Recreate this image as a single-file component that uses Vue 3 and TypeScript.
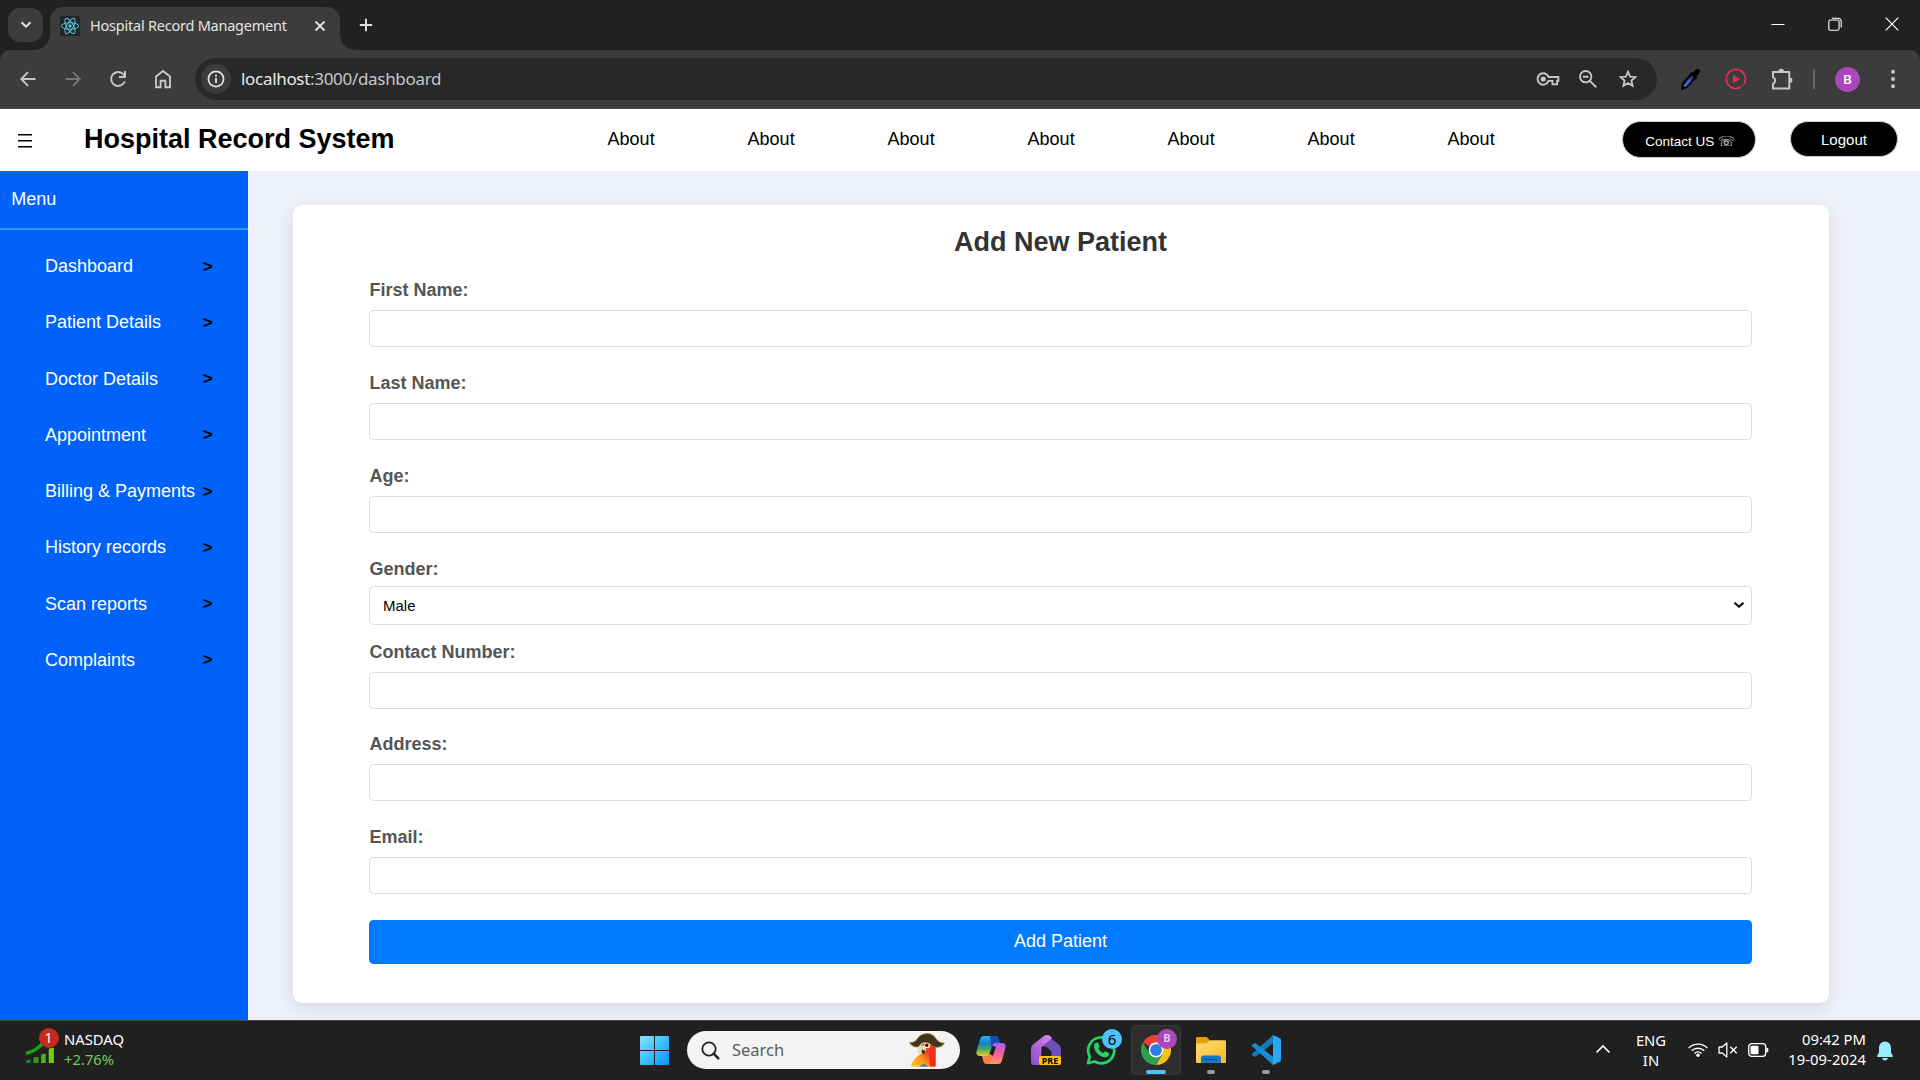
<script setup lang="ts">
import { ref } from 'vue'

interface Field {
  id: string
  label: string
  kind: 'text' | 'select'
}

const navLinks: string[] = Array.from({ length: 7 }, () => 'About')

const menuItems: string[] = [
  'Dashboard',
  'Patient Details',
  'Doctor Details',
  'Appointment',
  'Billing & Payments',
  'History records',
  'Scan reports',
  'Complaints',
]

const fields: Field[] = [
  { id: 'first', label: 'First Name:', kind: 'text' },
  { id: 'last', label: 'Last Name:', kind: 'text' },
  { id: 'age', label: 'Age:', kind: 'text' },
  { id: 'gender', label: 'Gender:', kind: 'select' },
  { id: 'phone-number', label: 'Contact Number:', kind: 'text' },
  { id: 'address', label: 'Address:', kind: 'text' },
  { id: 'email', label: 'Email:', kind: 'text' },
]

const gender = ref('Male')
</script>

<template>
  <div class="screen">
    <!-- Browser tab strip -->
    <div class="tabstrip">
      <div class="tab-search">
        <svg width="12" height="8" viewBox="0 0 12 8"><path d="M1.5 1.2 6 5.7l4.500-4.500" fill="none" stroke="#e3e3e3" stroke-width="2" /></svg>
      </div>
      <div class="tab">
        <svg class="favicon" width="20" height="20" viewBox="0 0 20 20">
          <rect width="20" height="20" rx="1.500" fill="#222425" />
          <g fill="none" stroke="#58c4dc" stroke-width="1">
            <ellipse cx="10" cy="10" rx="8.600" ry="3.300" />
            <ellipse cx="10" cy="10" rx="8.600" ry="3.300" transform="rotate(60 10 10)" />
            <ellipse cx="10" cy="10" rx="8.600" ry="3.300" transform="rotate(120 10 10)" />
          </g>
          <circle cx="10" cy="10" r="1.700" fill="#58c4dc" />
        </svg>
        <span class="tab-title">Hospital Record Management</span>
        <svg class="tab-close" width="12" height="12" viewBox="0 0 12 12"><path d="M1.500 1.500l9 9m0-9l-9 9" stroke="#e3e3e3" stroke-width="1.800" /></svg>
      </div>
      <svg class="new-tab" width="14" height="14" viewBox="0 0 14 14"><path d="M7 .8v12.400M.8 7h12.400" stroke="#e3e3e3" stroke-width="1.900" /></svg>
      <div class="window-buttons">
        <svg width="14" height="14" viewBox="0 0 14 14"><path d="M.5 7.500h13" stroke="#fff" stroke-width="1" /></svg>
        <svg width="14" height="14" viewBox="0 0 14 14" fill="none" stroke="#fff" stroke-width="1.100">
          <path d="M3.800 1.200h6.400a3 3 0 0 1 3 3v6.400" />
          <rect x=".8" y="3" width="10.300" height="10.300" rx="1.800" />
        </svg>
        <svg width="14" height="14" viewBox="0 0 14 14"><path d="M.7.7l12.600 12.600m0-12.600L.7 13.300" stroke="#fff" stroke-width="1.200" /></svg>
      </div>
    </div>

    <!-- Browser toolbar -->
    <div class="toolbar-back">
      <div class="toolbar">
        <div class="nav-slot"><svg width="18" height="18" viewBox="0 0 18 18" fill="none" stroke="#c7c7c7" stroke-width="1.900"><path d="M16.500 9H2.600M9 2.200 2.300 9 9 15.800" /></svg></div>
        <div class="nav-slot"><svg width="18" height="18" viewBox="0 0 18 18" fill="none" stroke="#777" stroke-width="1.900"><path d="M1.500 9h13.900M9 2.200 15.700 9 9 15.800" /></svg></div>
        <div class="nav-slot"><svg width="18" height="18" viewBox="0 0 18 18" fill="none" stroke="#c7c7c7" stroke-width="1.900"><path d="M15.800 11.200A7 7 0 1 1 14.300 4.200L16 6.200" /><path d="M16 1v6h-6" /></svg></div>
        <div class="nav-slot"><svg width="18" height="20" viewBox="0 0 18 20" fill="none" stroke="#c7c7c7" stroke-width="1.900"><path d="M2 18.300V7.400L9 2l7 5.400v10.900h-4.600v-6.500H6.600v6.500z" /></svg></div>

        <div class="omnibox">
          <div class="site-info">
            <svg width="18" height="18" viewBox="0 0 18 18"><circle cx="9" cy="9" r="7.600" fill="none" stroke="#e3e3e3" stroke-width="1.700" /><path d="M9 8v5M9 4.800v1.900" stroke="#e3e3e3" stroke-width="1.800" /></svg>
          </div>
          <span class="url"><span class="host">localhost</span>:3000/dashboard</span>
          <div class="omni-icons">
            <svg width="24" height="16" viewBox="0 0 24 16" fill="none" stroke="#c7c7c7" stroke-width="1.900">
              <path d="M12.600 6H22.400v3.800h-1.300v3.600h-4.600V9.900h-3.900A5.700 5.700 0 1 1 12.600 6z" />
              <circle cx="7.200" cy="8" r="2.600" fill="#c7c7c7" stroke="none" />
            </svg>
            <svg width="20" height="20" viewBox="0 0 20 20" fill="none" stroke="#c7c7c7" stroke-width="1.900">
              <circle cx="7.700" cy="7.700" r="5.700" /><path d="M11.900 11.900l6.400 6.400M4.900 7.700h5.600" />
            </svg>
            <svg width="20" height="20" viewBox="0 0 20 20" fill="none" stroke="#c7c7c7" stroke-width="1.800">
              <path d="M10 2.700l2.100 4.900 5.300.5-4 3.500 1.200 5.200L10 14l-4.600 2.800 1.200-5.200-4-3.500 5.300-.5z" />
            </svg>
          </div>
        </div>

        <div class="extensions">
          <svg width="20" height="22" viewBox="0 0 20 22">
            <path d="M1 21l1-5.500L10.500 6l3.800 3.800L5.500 19z" fill="#24408f" stroke="#000" stroke-width="2" />
            <path d="M3.600 18.500l5.600-6.300" stroke="#4665d8" stroke-width="2.600" />
            <path d="M9 5.300l1.800-1.500 1.200 1 2.500-3c1.500-1.400 3.500-1 4.200.3.600 1.200.3 2.500-.7 3.500L15.300 8.400l1 1.400-1.700 1.700z" fill="#000" />
          </svg>
          <svg width="22" height="22" viewBox="0 0 22 22" fill="none">
            <path d="M19.200 15.600A9.500 9.500 0 1 0 15.500 19.300" stroke="#ee2c5c" stroke-width="1.600" />
            <path d="M17.500 17.900l.7-.8" stroke="#ee2c5c" stroke-width="1.600" />
            <path d="M8 6.700v8.600l7.500-4.300z" fill="#e0294f" />
          </svg>
          <svg width="23" height="23" viewBox="0 0 23 23">
            <path d="M3 4h16.300v16.600H3v-4.800a3.700 3.700 0 0 0 0-6.700z" fill="none" stroke="#c7c7c7" stroke-width="2" stroke-linejoin="round" />
            <path d="M8.300 3.600a2.800 2.800 0 0 1 5.600 0zM19.700 9.500a2.700 2.700 0 0 1 0 5.400z" fill="#c7c7c7" />
          </svg>
        </div>
        <span class="divider"></span>
        <span class="avatar">B</span>
        <svg class="kebab" width="6" height="20" viewBox="0 0 6 20" fill="#c7c7c7"><circle cx="3" cy="2.800" r="2" /><circle cx="3" cy="10" r="2" /><circle cx="3" cy="17.200" r="2" /></svg>
      </div>
    </div>

    <!-- Application header -->
    <header class="app-header">
      <svg class="burger" width="14" height="14" viewBox="0 0 14 14"><path d="M0 .7h14M0 6.700h14M0 12.700h14" stroke="#000" stroke-width="1.400" /></svg>
      <h1>Hospital Record System</h1>
      <nav>
        <a v-for="(link, i) in navLinks" :key="i">{{ link }}</a>
      </nav>
      <button class="contact">Contact US <span class="phone">☏</span></button>
      <button class="logout">Logout</button>
    </header>

    <div class="app-body">
      <aside>
        <div class="menu-title">Menu</div>
        <ul>
          <li v-for="item in menuItems" :key="item"><span>{{ item }}</span><b>&gt;</b></li>
        </ul>
      </aside>

      <main>
        <form class="card" @submit.prevent>
          <h2>Add New Patient</h2>
          <div v-for="f in fields" :key="f.id" class="field" :class="[f.kind, f.id]">
            <label :for="f.id">{{ f.label }}</label>
            <input v-if="f.kind === 'text'" :id="f.id" type="text" />
            <div v-else class="select-box">
              <select :id="f.id" v-model="gender">
                <option>Male</option>
                <option>Female</option>
                <option>Other</option>
              </select>
              <svg class="caret" width="12" height="8" viewBox="0 0 12 8"><path d="M1.500 1.700 6 5.700l4.500-4" fill="none" stroke="#000" stroke-width="2" /></svg>
            </div>
          </div>
          <button class="submit" type="submit">Add Patient</button>
        </form>
      </main>
    </div>

    <!-- Desktop taskbar -->
    <footer class="taskbar">
      <div class="widget">
        <svg width="30" height="36" viewBox="0 0 30 36">
          <path d="M1 25.500C10 23.500 15 19 20 12.500" fill="none" stroke="#1ea01c" stroke-width="3.400" />
          <path d="M1 35v-1a2.200 2.200 0 0 1 2.200-2.200H5.500V35z" fill="#128a1c" />
          <path d="M8.500 35v-3.800a2.200 2.200 0 0 1 2.200-2.200h2.800v6z" fill="#2f9e16" />
          <path d="M16 35v-7a2.200 2.200 0 0 1 2.200-2.200h2.600V35z" fill="#48b412" />
          <path d="M23.700 35V22.200a2.200 2.200 0 0 1 2.200-2.200h3V35z" fill="#70cf0e" />
        </svg>
        <span class="badge red">1</span>
        <div class="ticker"><span>NASDAQ</span><span class="up">+2.76%</span></div>
      </div>

      <svg class="start" width="29" height="29" viewBox="0 0 29 29">
        <defs><linearGradient id="win" gradientUnits="userSpaceOnUse" x1="0" y1="0" x2="29" y2="29"><stop offset="0" stop-color="#86e3ff" /><stop offset=".5" stop-color="#3cc2fb" /><stop offset="1" stop-color="#0a8ffa" /></linearGradient></defs>
        <path d="M1 0h13v14H0V1a1 1 0 0 1 1-1zM15 0h13a1 1 0 0 1 1 1v13H15zM0 15h14v14H1a1 1 0 0 1-1-1zM15 15h14v13a1 1 0 0 1-1 1H15z" fill="url(#win)" />
      </svg>

      <div class="search">
        <svg width="19" height="19" viewBox="0 0 19 19" fill="none" stroke="#222"><circle cx="8" cy="8" r="6.700" stroke-width="1.800" /><path d="M12.700 12.700l4.600 4.600" stroke-width="2.500" stroke-linecap="round" /></svg>
        <span>Search</span>
        <svg class="parrot" width="36" height="34" viewBox="0 0 36 34">
          <defs><linearGradient id="body" x1="0" y1="1" x2="1" y2="0"><stop offset="0" stop-color="#ffc91c" /><stop offset=".35" stop-color="#fb9a1e" /><stop offset=".6" stop-color="#f4431d" /><stop offset="1" stop-color="#e52314" /></linearGradient></defs>
          <path d="M1.500 33.500C4 27 8 22.500 13.500 20.500L12 12l10-5 4.500 5v21.500z" fill="url(#body)" />
          <path d="M20 11h6.500v22.500H21z" fill="#ef2f19" />
          <path d="M9.500 33.500l5-2.500 5.500 2.500z" fill="#287ab8" />
          <path d="M11 13c-3 2.500-3 6-.5 9 1.700-1 2.500-2 3-3.500l2 1.500c2-2.500 2-6 0-7.500z" fill="#e9d9b6" />
          <path d="M13 16.500l3.500 1.500-1.500 3.500c-2-.5-2.700-2.500-2-5z" fill="#37302c" />
          <circle cx="18.200" cy="12.300" r="3" fill="#fff4e4" /><circle cx="17.800" cy="12.300" r="1.700" fill="#161616" />
          <path d="M.5 9.500C4 9.800 6.500 8.800 8.500 5.500 11 1.800 15 .6 18.500.6c4 0 6.500 2 8.500 5 2 3 4.500 4.500 8.500 4.400-1.700 3-5 4.800-9 4.200C22 13.500 21.500 9.500 17 9.400c-4.300-.1-6 2.100-7.500 4.400-4 .9-7.500-1.300-9-4.300z" fill="#40361f" stroke="#a58a3c" stroke-width=".8" />
        </svg>
      </div>

      <div class="apps">
        <div class="app">
          <svg width="30" height="30" viewBox="0 0 30 30">
            <defs>
              <linearGradient id="cpA" x1="0" y1="0" x2="0" y2="1"><stop offset="0" stop-color="#22b5ef" /><stop offset=".35" stop-color="#1380d8" /><stop offset=".65" stop-color="#47a768" /><stop offset="1" stop-color="#f2cc1f" /></linearGradient>
              <linearGradient id="cpB" x1="0" y1="0" x2="0" y2="1"><stop offset="0" stop-color="#a45df2" /><stop offset=".5" stop-color="#f0619c" /><stop offset="1" stop-color="#fd9a5c" /></linearGradient>
            </defs>
            <path d="M8 1h11c2.300 0 3.200 1.500 3.800 3.500l1 3.500h-4c-2 0-3 1-3.600 3L14 18.500C13.300 20 12.500 21 11 21H4C1 21-.2 19 .7 16L4 4.500C4.700 2 6 1 8 1z" fill="url(#cpA)" />
            <path d="M14 1h5c2.300 0 3.200 1.500 3.800 3.500l1 3.500h-4c-2 0-3 1-3.600 3l-.6 2z" fill="#1747bd" />
            <path d="M22 29H11c-2 0-3-1-3.700-3L6 21h5c1.500 0 2.500-1 3-2.500l2.500-8C17 8.500 18 8 20 8h6c3 0 4.200 2 3.300 5L26 25.500C25.300 28 24 29 22 29z" fill="url(#cpB)" />
            <path d="M16.300 10.800l3.600 1-2.800 9-4-1z" fill="#20202a" />
            <path d="M7 23l-1-2h5l2.500-2 3 1.500L13.500 29H11c-2 0-3-1-3.500-3z" fill="#f48245" />
          </svg>
        </div>
        <div class="app">
          <svg width="32" height="32" viewBox="0 0 32 32">
            <defs><linearGradient id="home" x1="1" y1="0" x2="0" y2="1"><stop offset="0" stop-color="#e58bef" /><stop offset=".5" stop-color="#b267e0" /><stop offset="1" stop-color="#8a4cc9" /></linearGradient></defs>
            <path d="M18 2l10.500 8.200c1.700 1.300 2.500 2.700 2.500 5V31H20V17l-8-6z" fill="#6e4fb5" />
            <path d="M13.800 2c2-1.500 4.500-1.500 6.300 0l2 2-10.600 9.300V28c0 2-1 3-3 3H4c-2 0-3-1-3-3V15c0-2.200.8-3.500 2.500-5z" fill="url(#home)" />
            <path d="M16 12.500l5.500 5V22h-10v-5z" fill="#202020" />
          </svg>
          <span class="pre">PRE</span>
        </div>
        <div class="app">
          <svg width="30" height="30" viewBox="0 0 30 30">
            <path d="M2 28.200l1.800-6.600A13 13 0 1 1 8.500 26.500z" fill="none" stroke="#25d366" stroke-width="2.700" stroke-linejoin="round" />
            <path d="M10.700 7.500c.7-.2 1.300 0 1.600.8l1.200 2.800c.2.600-.1 1-1.200 2.300 1.200 2.300 2.700 3.700 5 4.700 1.300-1.600 1.700-2 2.300-1.700l2.900 1.400c.6.300.8.700.5 1.700-.6 2-2.300 3-4.300 2.800C13.500 21.800 8 16 8 11.200c0-2 1-3.300 2.700-3.700z" fill="#25d366" />
          </svg>
          <span class="badge blue">6</span>
        </div>
        <div class="app active">
          <svg width="30" height="30" viewBox="0 0 30 30">
            <path d="M15 15 2 7.500A15 15 0 0 1 28 7.500H15z" fill="#ea4335" />
            <path d="M28 7.500A15 15 0 0 1 15 30l6.500-11.200L15 7.500z" fill="#fbc116" />
            <path d="M2 7.500A15 15 0 0 0 15 30l6.500-11.200L8.500 18.800z" fill="#2ba24c" />
            <circle cx="15" cy="15" r="7.400" fill="#fff" /><circle cx="15" cy="15" r="5.900" fill="#2f7de9" />
          </svg>
          <span class="badge purple">B</span>
          <i class="bar"></i>
        </div>
        <div class="app">
          <svg width="30" height="30" viewBox="0 0 30 30">
            <defs><linearGradient id="fold" x1="0" y1="0" x2="1" y2="1"><stop offset="0" stop-color="#ffe07a" /><stop offset="1" stop-color="#f8b61e" /></linearGradient></defs>
            <path d="M0 9V3.500C0 2.500.6 2 1.500 2h8c1 0 1.600.3 2.200 1L14 5.500V9z" fill="#e3a008" />
            <path d="M0 8.500h9.500c1 0 1.700-.3 2.300-1L13 6c.5-.6 1-.8 2-.8h13.500c1 0 1.500.5 1.500 1.500v20c0 1-.5 1.300-1.500 1.300h-27C.5 28 0 27.600 0 26.700z" fill="url(#fold)" />
            <path d="M5 28v-5c0-1.500 1-2.500 2.500-2.500h15c1.500 0 2.500 1 2.500 2.500v5z" fill="#1279ca" />
            <path d="M8.500 24.500h13" stroke="#0b4d8f" stroke-width="1.300" />
          </svg>
          <i class="dot"></i>
        </div>
        <div class="app">
          <svg width="30" height="30" viewBox="0 0 30 30">
            <path d="M22 8.200 4.200 22 1.500 20.800c-.9-.5-1-1.300-.3-2L22 0z" fill="#1279bd" />
            <path d="M22 21.800 4.200 8 1.500 9.200c-.9.500-1 1.300-.3 2L22 30z" fill="#168ed4" />
            <path d="M22 0l6.500 3c1 .5 1.500 1.200 1.500 2.200v19.600c0 1-.5 1.700-1.500 2.200L22 30z" fill="#2aa7f2" />
          </svg>
          <i class="dot"></i>
        </div>
      </div>

      <div class="tray">
        <svg class="up-arrow" width="16" height="10" viewBox="0 0 16 10"><path d="M1.500 8.500 8 2l6.500 6.500" fill="none" stroke="#fff" stroke-width="1.700" /></svg>
        <div class="lang"><span>ENG</span><span>IN</span></div>
        <svg class="wifi" width="20" height="15" viewBox="0 0 20 15" fill="none" stroke="#fff" stroke-width="1.400">
          <path d="M.7 6a13.200 13.200 0 0 1 18.600 0M3.700 8.800a9 9 0 0 1 12.600 0M6.500 11.400a5 5 0 0 1 7 0" /><circle cx="10" cy="13.200" r="1.700" fill="#fff" stroke="none" />
        </svg>
        <svg class="speaker" width="20" height="16" viewBox="0 0 20 16" fill="none" stroke="#fff" stroke-width="1.300">
          <path d="M1 5h3.200L8.800 1v14L4.200 11H1z" stroke-linejoin="round" /><path d="M12.300 4.700l6.400 6.600m0-6.600l-6.400 6.600" />
        </svg>
        <svg class="battery" width="21" height="14" viewBox="0 0 21 14">
          <rect x=".7" y=".7" width="17" height="12.600" rx="3" fill="none" stroke="#fff" stroke-width="1.300" /><rect x="2.500" y="2.700" width="8" height="8.600" rx="1" fill="#fff" /><path d="M18.300 4.700h.7a1.300 1.300 0 0 1 1.300 1.300v2A1.300 1.300 0 0 1 19 9.300h-.7z" fill="#fff" />
        </svg>
        <div class="clock"><span>09:42 PM</span><span class="date">19-09-2024</span></div>
        <svg class="bell" width="18" height="20" viewBox="0 0 18 20" fill="#99ebff"><path d="M9 .5a6 6 0 0 1 6 6v5l1.800 3.300c.3.600 0 1.200-.8 1.200H2c-.8 0-1.100-.6-.8-1.200L3 11.500v-5a6 6 0 0 1 6-6zM6 17h6c-.4 1.600-1.500 2.500-3 2.500S6.400 18.600 6 17z" /></svg>
      </div>
    </footer>
  </div>
</template>

<style>
body {
  margin: 0;
  overflow: hidden;
}
</style>

<style scoped>
.screen {
  width: 1920px;
  height: 1080px;
  display: flex;
  flex-direction: column;
  overflow: hidden;
  font-family: "Liberation Sans", Arial, sans-serif;
  font-size: 18px;
  box-sizing: border-box;
}
.screen *,
.screen *::before,
.screen *::after {
  box-sizing: border-box;
}
svg {
  display: block;
  flex: none;
}
button {
  font-family: inherit;
  margin: 0;
  padding: 0;
}

/* Tab strip */
.tabstrip {
  height: 50px;
  flex: none;
  display: flex;
  background: #202221;
  font-family: "Noto Sans", "Open Sans", sans-serif;
}
.tab-search {
  width: 35px;
  height: 34px;
  margin: 8px 0 0 8px;
  border-radius: 12px;
  background: #3c3c3c;
  display: flex;
  align-items: center;
  justify-content: center;
}
.tab {
  position: relative;
  width: 290px;
  height: 43px;
  margin: 7px 0 0 7px;
  padding: 0 14px 6px 10px;
  border-radius: 13px 13px 0 0;
  background: #3c3c3c;
  display: flex;
  align-items: center;
}
.tab::before,
.tab::after {
  content: "";
  position: absolute;
  bottom: 0;
  width: 15px;
  height: 15px;
}
.tab::before {
  left: -15px;
  background: radial-gradient(circle at 0 0, transparent 14.5px, #3c3c3c 15px);
}
.tab::after {
  right: -15px;
  background: radial-gradient(circle at 100% 0, transparent 14.5px, #3c3c3c 15px);
}
.tab-title {
  margin-left: 10px;
  padding-bottom: 1px;
  color: #e3e3e3;
  font-size: 14.5px;
  letter-spacing: -0.23px;
  line-height: 20px;
  white-space: nowrap;
}
.tab-close {
  margin-left: auto;
}
.new-tab {
  margin: 18px 0 0 19px;
}
.window-buttons {
  margin: 17px 21.5px 0 auto;
  display: flex;
  gap: 43px;
}

/* Toolbar */
.toolbar-back {
  flex: none;
  background: #202221;
}
.toolbar {
  height: 59px;
  padding-left: 5px;
  background: #3c3c3c;
  border-radius: 10px 10px 0 0;
  border-bottom: 1px solid #474747;
  display: flex;
  align-items: center;
}
.nav-slot {
  width: 45px;
  display: flex;
  justify-content: center;
}
.omnibox {
  width: 1462px;
  height: 42px;
  margin-left: 10px;
  padding: 0 9.5px 0 6px;
  border-radius: 21px;
  background: #282828;
  display: flex;
  align-items: center;
}
.site-info {
  width: 30px;
  height: 30px;
  border-radius: 50%;
  background: #3c3c3c;
  display: flex;
  align-items: center;
  justify-content: center;
}
.url {
  margin-left: 10px;
  color: #c7c7c7;
  font-family: "Noto Sans", "Open Sans", sans-serif;
  font-size: 17px;
  letter-spacing: -0.31px;
  line-height: 24px;
  white-space: nowrap;
}
.host {
  color: #e8e8e8;
}
.omni-icons {
  margin-left: auto;
  width: 120px;
  display: grid;
  grid-template-columns: repeat(3, 40px);
  justify-items: center;
  align-items: center;
}
.extensions {
  margin-left: 11.5px;
  display: grid;
  grid-template-columns: repeat(3, 45px);
  justify-items: center;
  align-items: center;
}
.divider {
  width: 2px;
  height: 20px;
  margin-left: 9.5px;
  background: #666;
}
.avatar {
  width: 25px;
  height: 25px;
  margin-left: 20px;
  border-radius: 50%;
  background: #ab47bc;
  color: #fff;
  font: 500 13.5px/25px Roboto, sans-serif;
  text-align: center;
}
.kebab {
  margin-left: 30px;
}

/* Application header */
.app-header {
  height: 62px;
  flex: none;
  display: flex;
  background: #fff;
  color: #000;
}
.burger {
  margin: 25px 0 0 18px;
}
h1 {
  width: 523.6px;
  margin: 15px 0 0 52px;
  font-size: 27px;
  line-height: 30px;
  white-space: nowrap;
}
nav {
  display: grid;
  grid-template-columns: repeat(7, 140px);
  padding-top: 20px;
  line-height: 20px;
}
.contact,
.logout {
  border: 1px solid #ccc;
  border-radius: 19px;
  background: #000;
  color: #fff;
  white-space: nowrap;
}
.contact {
  width: 134px;
  height: 37px;
  margin: 12px 0 0 34.4px;
  padding: 2px 0 0 2px;
  font-size: 13.5px;
}
.phone {
  font-family: "DejaVu Sans", sans-serif;
}
.logout {
  width: 108px;
  height: 36px;
  margin: 12px 0 0 34px;
  font-size: 15px;
}

/* Sidebar */
.app-body {
  height: 849px;
  flex: none;
  display: flex;
}
aside {
  width: 248px;
  background: #0062fa;
  color: #fff;
}
.menu-title {
  height: 59px;
  padding: 18px 0 0 11.25px;
  line-height: 20px;
  border-bottom: 2px solid #309bff;
}
ul {
  margin: 0;
  padding: 8.5px 35.4px 0 45px;
  list-style: none;
}
li {
  height: 56.25px;
  display: flex;
  align-items: center;
  justify-content: space-between;
  white-space: nowrap;
}
li b {
  color: #000;
  font-size: 17px;
}

/* Patient form */
main {
  flex: 1;
  padding: 34px 91px 17px 45px;
  background: #eef1fa;
}
.card {
  height: 798px;
  padding: 22px 77px 0 76px;
  border-radius: 9px;
  background: #fff;
  box-shadow: 0 4.5px 17px rgba(0, 0, 0, 0.1);
}
h2 {
  height: 53px;
  margin: 0;
  color: #333;
  font-size: 27px;
  line-height: 30px;
  text-align: center;
}
.field {
  height: 93px;
}
.field.select {
  height: 83px;
}
.field.phone-number {
  height: 92px;
}
label {
  display: block;
  height: 30px;
  padding-left: 0.4px;
  color: #555;
  font-weight: 700;
  line-height: 20px;
}
.select label {
  height: 27px;
}
input,
select {
  display: block;
  width: 100%;
  height: 37px;
  margin: 0;
  padding: 0 13px;
  border: 1px solid #ddd;
  border-radius: 4.5px;
  background: #fff;
  color: #000;
  font-family: inherit;
  font-size: 15px;
}
select {
  height: 39px;
  appearance: none;
}
.select-box {
  position: relative;
}
.caret {
  position: absolute;
  top: 15px;
  right: 7px;
  pointer-events: none;
}
.submit {
  display: block;
  width: 100%;
  height: 44px;
  padding-bottom: 2px;
  border: 0;
  border-radius: 4.5px;
  background: #007bff;
  color: #fff;
  font-size: 18px;
}

/* Taskbar */
.taskbar {
  height: 60px;
  flex: none;
  display: flex;
  background: #202020;
  border-top: 1px solid #414345;
  color: #fff;
  font-family: "Noto Sans", "Open Sans", sans-serif;
  font-size: 14.8px;
  line-height: 20px;
}
.widget {
  position: relative;
  width: 615px;
  padding: 7px 0 0 25px;
  display: flex;
}
.badge {
  position: absolute;
  width: 20px;
  height: 20px;
  border-radius: 50%;
  text-align: center;
}
.badge.red {
  left: 38.5px;
  top: 6.5px;
  background: #c42b1c;
  font-size: 13.5px;
}
.ticker {
  margin: 1px 0 0 9px;
  display: flex;
  flex-direction: column;
}
.up {
  color: #6ccb5f;
}
.start {
  margin: 15px 0 0 25px;
}
.search {
  width: 273px;
  height: 38px;
  margin: 10px 0 0 18px;
  padding: 0 15px 0 14px;
  border-radius: 19px;
  background: #f3f3f3;
  color: #5c5c5c;
  display: flex;
  align-items: center;
}
.search span {
  margin-left: 12px;
  font-size: 16.5px;
}
.parrot {
  margin-left: auto;
}
.apps {
  margin: 4px 0 0 1px;
  display: flex;
}
.app {
  position: relative;
  width: 50px;
  height: 50px;
  margin: 0 0 0 5px;
  display: flex;
  align-items: center;
  justify-content: center;
}
.app.active {
  border: 1px solid #3a3a3a;
  border-radius: 5px;
  background: #2d2d2d;
}
.pre {
  position: absolute;
  left: 18px;
  top: 31px;
  width: 22px;
  height: 9px;
  border-radius: 2px;
  background: #ffc20e;
  color: #000;
  font: 700 9px/9px "Noto Sans", sans-serif;
  text-align: center;
}
.badge.blue {
  left: 26px;
  top: 4px;
  background: #4cc2ff;
  color: #000;
  font-size: 15px;
}
.badge.purple {
  left: 25px;
  top: 3px;
  background: #ab47bc;
  color: #e9c8ee;
  font: 700 11px/20px Roboto, sans-serif;
}
.bar,
.dot {
  position: absolute;
  bottom: 0;
  height: 4px;
  border-radius: 2px;
}
.bar {
  width: 20px;
  background: #4cc2ff;
}
.dot {
  bottom: 1px;
  width: 8px;
  background: #9a9a9a;
}
.tray {
  flex: 1;
  display: flex;
  padding-left: 304px;
}
.up-arrow {
  margin-top: 23px;
}
.lang,
.clock {
  display: flex;
  flex-direction: column;
}
.lang {
  width: 40px;
  margin: 9px 0 0 20px;
  text-align: center;
}
.wifi {
  margin: 21px 0 0 17px;
}
.speaker {
  margin: 21px 0 0 10px;
}
.battery {
  margin: 22px 0 0 10px;
}
.clock {
  width: 97px;
  margin-top: 8px;
  text-align: right;
}
.date {
  letter-spacing: 0.05px;
}
.bell {
  margin: 20px 0 0 10px;
}
</style>
